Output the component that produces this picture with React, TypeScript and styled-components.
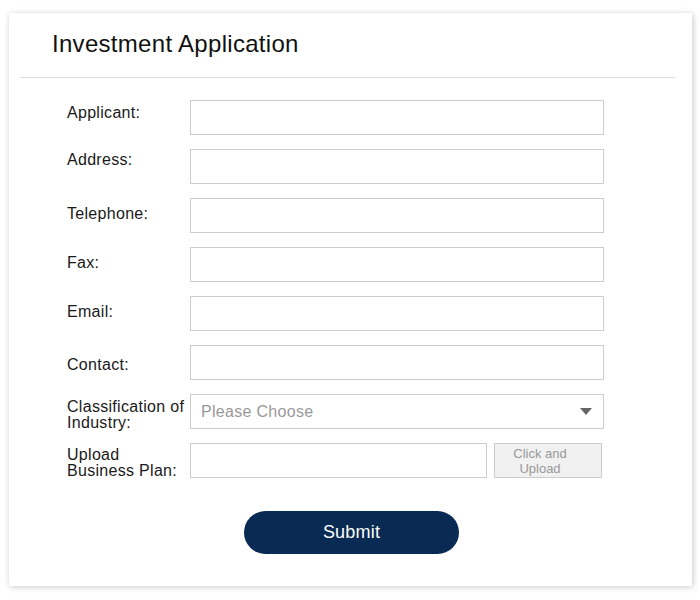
import React from "react";
import styled, { createGlobalStyle } from "styled-components";

const GlobalStyle = createGlobalStyle`
  html, body {
    margin: 0;
    padding: 0;
    background: #ffffff;
    font-family: "Liberation Sans", Arial, sans-serif;
  }
  * { box-sizing: border-box; }
`;

const Page = styled.div`
  padding: 13px 8px 14px 9px;
`;

const Card = styled.div`
  width: 683px;
  height: 573px;
  background: #ffffff;
  box-shadow: 1px 1px 6px rgba(0, 0, 0, 0.22);
  display: flex;
  flex-direction: column;
`;

const Header = styled.div`
  margin: 0 17px 0 11px;
  padding: 17px 0 19px 32px;
  border-bottom: 1px solid #dcdcdc;
`;

const Title = styled.h1`
  margin: 0;
  font-size: 24px;
  line-height: 28px;
  font-weight: normal;
  color: #111111;
  letter-spacing: 0.3px;
`;

const Form = styled.form`
  display: grid;
  grid-template-columns: 123px 414px;
  grid-auto-rows: 35px;
  row-gap: 14px;
  padding: 22px 0 0 58px;
`;

const Label = styled.label<{ $top: number }>`
  font-size: 16px;
  line-height: 16px;
  color: #1a1a1a;
  padding-top: ${(p) => p.$top}px;
  letter-spacing: 0.3px;
  white-space: nowrap;
`;

const TextInput = styled.input`
  height: 35px;
  width: 100%;
  border: 1px solid #cccccc;
  background: #ffffff;
  font-family: inherit;
  font-size: 16px;
  padding: 0 10px;
  outline: none;
`;

const SelectBox = styled.div`
  height: 35px;
  border: 1px solid #cccccc;
  display: flex;
  align-items: center;
  justify-content: space-between;
  padding: 0 11px 0 10px;
  font-size: 16px;
  color: #999999;
  letter-spacing: 0.3px;
`;

const UploadRow = styled.div`
  display: flex;
  gap: 7px;
`;

const UploadInput = styled(TextInput)`
  width: 297px;
`;

const UploadButton = styled.button`
  width: 108px;
  height: 35px;
  border: 1px solid #cccccc;
  background: #f1f1f1;
  color: #999999;
  font-family: inherit;
  font-size: 13px;
  line-height: 15px;
  padding: 0 16px 0 0;
  text-align: center;
`;

const Footer = styled.div`
  display: flex;
  justify-content: center;
  padding: 33px 0 0 2px;
`;

const SubmitButton = styled.button`
  width: 215px;
  height: 43px;
  border: none;
  border-radius: 22px;
  background: #092a52;
  color: #ffffff;
  font-family: inherit;
  font-size: 18px;
  letter-spacing: 0.2px;
`;

const fields: { label: string; top: number }[] = [
  { label: "Applicant:", top: 5 },
  { label: "Address:", top: 3 },
  { label: "Telephone:", top: 8 },
  { label: "Fax:", top: 8 },
  { label: "Email:", top: 8 },
  { label: "Contact:", top: 12 },
];

export default function App() {
  return (
    <>
      <GlobalStyle />
      <Page>
        <Card>
          <Header>
            <Title>Investment Application</Title>
          </Header>
          <Form onSubmit={(e) => e.preventDefault()}>
            {fields.map((f) => (
              <React.Fragment key={f.label}>
                <Label $top={f.top}>{f.label}</Label>
                <TextInput type="text" />
              </React.Fragment>
            ))}
            <Label $top={5}>
              Classification of
              <br />
              Industry:
            </Label>
            <SelectBox>
              <span>Please Choose</span>
              <svg width="12" height="8" viewBox="0 0 12 8">
                <polygon points="0,0 12,0 6,7" fill="#666666" />
              </svg>
            </SelectBox>
            <Label $top={4}>
              Upload
              <br />
              Business Plan:
            </Label>
            <UploadRow>
              <UploadInput type="text" />
              <UploadButton type="button">
                Click and
                <br />
                Upload
              </UploadButton>
            </UploadRow>
          </Form>
          <Footer>
            <SubmitButton type="submit">Submit</SubmitButton>
          </Footer>
        </Card>
      </Page>
    </>
  );
}
